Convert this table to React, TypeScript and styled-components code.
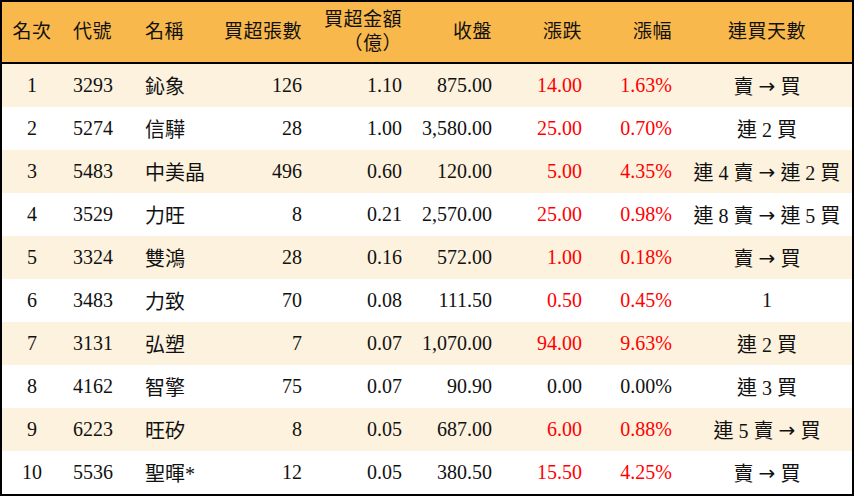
import * as React from 'react';
import styled, { createGlobalStyle } from 'styled-components';

const GlobalStyle = createGlobalStyle`
  html, body {
    margin: 0;
    padding: 0;
    background: #ffffff;
  }
`;

type Align = 'left' | 'center' | 'right';

interface Column {
  key: string;
  title: React.ReactNode;
  width: number;
  align: Align;
}

const columns: Column[] = [
  { key: 'rank', title: '名次', width: 60, align: 'center' },
  { key: 'code', title: '代號', width: 72, align: 'left' },
  { key: 'name', title: '名稱', width: 88, align: 'left' },
  { key: 'lots', title: '買超張數', width: 90, align: 'right' },
  {
    key: 'amount',
    title: (
      <>
        買超金額
        <br />
        （億）
      </>
    ),
    width: 100,
    align: 'right',
  },
  { key: 'close', title: '收盤', width: 90, align: 'right' },
  { key: 'change', title: '漲跌', width: 90, align: 'right' },
  { key: 'pct', title: '漲幅', width: 90, align: 'right' },
  { key: 'streak', title: '連買天數', width: 170, align: 'center' },
];

interface Stock {
  rank: number;
  code: string;
  name: string;
  lots: number;
  amount: string;
  close: string;
  change: string;
  pct: string;
  streak: string;
}

const stocks: Stock[] = [
  { rank: 1, code: '3293', name: '鈊象', lots: 126, amount: '1.10', close: '875.00', change: '14.00', pct: '1.63%', streak: '賣 → 買' },
  { rank: 2, code: '5274', name: '信驊', lots: 28, amount: '1.00', close: '3,580.00', change: '25.00', pct: '0.70%', streak: '連 2 買' },
  { rank: 3, code: '5483', name: '中美晶', lots: 496, amount: '0.60', close: '120.00', change: '5.00', pct: '4.35%', streak: '連 4 賣 → 連 2 買' },
  { rank: 4, code: '3529', name: '力旺', lots: 8, amount: '0.21', close: '2,570.00', change: '25.00', pct: '0.98%', streak: '連 8 賣 → 連 5 買' },
  { rank: 5, code: '3324', name: '雙鴻', lots: 28, amount: '0.16', close: '572.00', change: '1.00', pct: '0.18%', streak: '賣 → 買' },
  { rank: 6, code: '3483', name: '力致', lots: 70, amount: '0.08', close: '111.50', change: '0.50', pct: '0.45%', streak: '1' },
  { rank: 7, code: '3131', name: '弘塑', lots: 7, amount: '0.07', close: '1,070.00', change: '94.00', pct: '9.63%', streak: '連 2 買' },
  { rank: 8, code: '4162', name: '智擎', lots: 75, amount: '0.07', close: '90.90', change: '0.00', pct: '0.00%', streak: '連 3 買' },
  { rank: 9, code: '6223', name: '旺矽', lots: 8, amount: '0.05', close: '687.00', change: '6.00', pct: '0.88%', streak: '連 5 賣 → 買' },
  { rank: 10, code: '5536', name: '聖暉*', lots: 12, amount: '0.05', close: '380.50', change: '15.50', pct: '4.25%', streak: '賣 → 買' },
];

const pad = (align: Align) =>
  align === 'left' ? '0 0 0 11px' : align === 'right' ? '0 10px 0 0' : '0';

const Frame = styled.div`
  box-sizing: border-box;
  width: 854px;
  height: 496px;
  border: 2px solid #000000;
  overflow: hidden;
`;

const Table = styled.table`
  width: 100%;
  table-layout: fixed;
  border-collapse: separate;
  border-spacing: 0;
  font-family: 'Liberation Serif', 'Noto Sans CJK TC', serif;
  font-size: 20px;
  color: #111111;
`;

const HeadRow = styled.tr`
  height: 62px;
  background: #f9b84b;
`;

const HeadCell = styled.th<{ $align: Align }>`
  padding: ${({ $align }) => pad($align)};
  text-align: ${({ $align }) => $align};
  vertical-align: middle;
  font-weight: 400;
  font-size: 19px;
  letter-spacing: 0.5px;
  line-height: 24px;
  border-bottom: 2px solid #000000;
  white-space: nowrap;
`;

const Row = styled.tr<{ $shaded: boolean }>`
  height: 43px;
  background: ${({ $shaded }) => ($shaded ? '#fdf2de' : '#ffffff')};
`;

const Cell = styled.td<{ $align: Align; $red?: boolean }>`
  padding: ${({ $align }) => pad($align)};
  text-align: ${({ $align }) => $align};
  vertical-align: middle;
  white-space: nowrap;
  color: ${({ $red }) => ($red ? '#ff0000' : '#111111')};
`;

const Arrow = styled.span`
  font-family: 'DejaVu Sans', sans-serif;
  font-size: 20px;
  position: relative;
  top: -1px;
`;

const renderStreak = (text: string) => {
  const parts = text.split('→');
  return parts.map((p, i) => (
    <React.Fragment key={i}>
      {i > 0 && <Arrow>→</Arrow>}
      {p}
    </React.Fragment>
  ));
};

const App: React.FC = () => {
  return (
    <>
      <GlobalStyle />
      <Frame>
        <Table>
          <colgroup>
            {columns.map((c) => (
              <col key={c.key} style={{ width: c.width }} />
            ))}
          </colgroup>
          <thead>
            <HeadRow>
              {columns.map((c) => (
                <HeadCell key={c.key} $align={c.align}>
                  {c.title}
                </HeadCell>
              ))}
            </HeadRow>
          </thead>
          <tbody>
            {stocks.map((s, i) => {
              const up = parseFloat(s.change) > 0;
              return (
                <Row key={s.code} $shaded={i % 2 === 0}>
                  <Cell $align="center">{s.rank}</Cell>
                  <Cell $align="left">{s.code}</Cell>
                  <Cell $align="left">{s.name}</Cell>
                  <Cell $align="right">{s.lots}</Cell>
                  <Cell $align="right">{s.amount}</Cell>
                  <Cell $align="right">{s.close}</Cell>
                  <Cell $align="right" $red={up}>
                    {s.change}
                  </Cell>
                  <Cell $align="right" $red={up}>
                    {s.pct}
                  </Cell>
                  <Cell $align="center">{renderStreak(s.streak)}</Cell>
                </Row>
              );
            })}
          </tbody>
        </Table>
      </Frame>
    </>
  );
};

export default App;
